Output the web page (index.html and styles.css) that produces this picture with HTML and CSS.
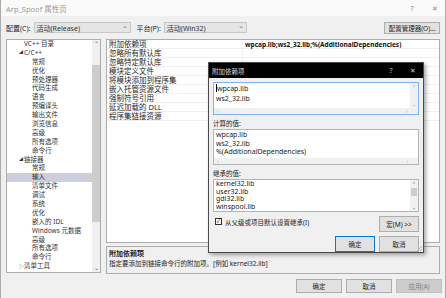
FILE: index.html
```html
<!DOCTYPE html>
<html lang="zh-CN">
<head>
    <meta charset="UTF-8">
    <title>Arp_Spoof 属性页</title>
    <link rel="stylesheet" href="styles.css">
</head>
<body>
    <div class="window">
        <div class="titlebar">
            <span class="title">Arp_Spoof 属性页</span>
            <span class="tb-btn">?</span>
            <span class="tb-btn">✕</span>
        </div>

        <div class="config-row">
            <span class="label">配置(C):</span>
            <div class="combo combo-config">活动(Release)<span class="arrow">⌄</span></div>
            <span class="label">平台(P):</span>
            <div class="combo combo-platform">活动(Win32)<span class="arrow">⌄</span></div>
            <button class="btn btn-manager">配置管理器(O)...</button>
        </div>

        <div class="main">
            <div class="tree">
                <ul class="tree-list">
                    <li class="lv1">VC++ 目录</li>
                    <li class="lv1 open">C/C++</li>
                    <li class="lv2">常规</li>
                    <li class="lv2">优化</li>
                    <li class="lv2">预处理器</li>
                    <li class="lv2">代码生成</li>
                    <li class="lv2">语言</li>
                    <li class="lv2">预编译头</li>
                    <li class="lv2">输出文件</li>
                    <li class="lv2">浏览信息</li>
                    <li class="lv2">高级</li>
                    <li class="lv2">所有选项</li>
                    <li class="lv2">命令行</li>
                    <li class="lv1 open">链接器</li>
                    <li class="lv2">常规</li>
                    <li class="lv2 selected">输入</li>
                    <li class="lv2">清单文件</li>
                    <li class="lv2">调试</li>
                    <li class="lv2">系统</li>
                    <li class="lv2">优化</li>
                    <li class="lv2">嵌入的 IDL</li>
                    <li class="lv2">Windows 元数据</li>
                    <li class="lv2">高级</li>
                    <li class="lv2">所有选项</li>
                    <li class="lv2">命令行</li>
                    <li class="lv1 closed">清单工具</li>
                </ul>
                <div class="vscroll">
                    <span class="sc-arrow">⌃</span>
                    <div class="sc-track"><div class="sc-thumb"></div></div>
                    <span class="sc-arrow">⌄</span>
                </div>
            </div>

            <div class="right">
                <div class="grid">
                    <div class="row"><span class="name">附加依赖项</span><span class="value bold">wpcap.lib;ws2_32.lib;%(AdditionalDependencies)</span></div>
                    <div class="row"><span class="name">忽略所有默认库</span><span class="value"></span></div>
                    <div class="row"><span class="name">忽略特定默认库</span><span class="value"></span></div>
                    <div class="row"><span class="name">模块定义文件</span><span class="value"></span></div>
                    <div class="row"><span class="name">将模块添加到程序集</span><span class="value"></span></div>
                    <div class="row"><span class="name">嵌入托管资源文件</span><span class="value"></span></div>
                    <div class="row"><span class="name">强制符号引用</span><span class="value"></span></div>
                    <div class="row"><span class="name">延迟加载的 DLL</span><span class="value"></span></div>
                    <div class="row"><span class="name">程序集链接资源</span><span class="value"></span></div>
                </div>
                <div class="desc">
                    <div class="desc-title">附加依赖项</div>
                    <div class="desc-text">指定要添加到链接命令行的附加项。[例如 kernel32.lib]</div>
                </div>
            </div>
        </div>

        <div class="footer">
            <button class="btn">确定</button>
            <button class="btn">取消</button>
            <button class="btn" disabled>应用(A)</button>
        </div>

        <div class="dlg">
            <div class="dlg-title">
                <span class="title">附加依赖项</span>
                <span class="tb-btn">?</span>
                <span class="tb-btn">✕</span>
            </div>
            <div class="dlg-body">
                <div class="box box-edit">
                    <div class="box-inner">
                        <div class="box-lines"><span class="caret"></span>wpcap.lib<br>ws2_32.lib</div>
                        <div class="box-vs"><span>⌃</span><span>⌄</span></div>
                    </div>
                    <div class="hscroll"><span>‹</span><span>›</span></div>
                </div>

                <div class="dlg-label">计算的值:</div>
                <div class="box box-calc">
                    <div class="box-lines">wpcap.lib<br>ws2_32.lib<br>%(AdditionalDependencies)</div>
                    <div class="hscroll"><span>‹</span><span>›</span></div>
                </div>

                <div class="dlg-label">继承的值:</div>
                <div class="box box-inherit">
                    <div class="box-lines">kernel32.lib<br>user32.lib<br>gdi32.lib<br>winspool.lib</div>
                    <div class="box-vs">
                        <span>⌃</span>
                        <div class="vs-thumb"></div>
                        <span>⌄</span>
                    </div>
                </div>

                <div class="dlg-row">
                    <label class="check"><span class="checkbox">✓</span>从父级或项目默认设置继承(I)</label>
                    <button class="btn btn-small">宏(M) &gt;&gt;</button>
                </div>
                <div class="dlg-buttons">
                    <button class="btn btn-small focused">确定</button>
                    <button class="btn btn-small">取消</button>
                </div>
            </div>
            <span class="grip"></span>
        </div>
    </div>
</body>
</html>
```

FILE: styles.css
```css
body {
    margin: 0;
    padding: 0;
    width: 446px;
    height: 298px;
    overflow: hidden;
    font-family: "Noto Sans", "Noto Sans CJK SC", sans-serif;
    font-size: 7px;
    color: #1e1e1e;
    background-color: #f0f0f0;
}

.window {
    position: relative;
    width: 446px;
    height: 298px;
    box-sizing: border-box;
    border-left: 1px solid #aaa;
    border-right: 1px solid #aaa;
    display: flex;
    flex-direction: column;
}

.titlebar {
    height: 16px;
    background-color: #fafafa;
    display: flex;
    align-items: center;
    padding-left: 5px;
    padding-right: 6px;
    gap: 15px;
    flex-shrink: 0;
}

.titlebar .title {
    flex: 1;
    color: #999;
    font-size: 7.5px;
}

.tb-btn {
    color: #888;
    font-size: 7px;
    width: 8px;
    text-align: center;
}

.config-row {
    height: 22px;
    display: flex;
    align-items: center;
    padding-left: 5px;
    padding-top: 1px;
    box-sizing: border-box;
    flex-shrink: 0;
}

.label {
    margin-right: 3px;
}

.combo {
    height: 11px;
    box-sizing: border-box;
    border: 1px solid #c8c8c8;
    background-color: #e5e5e5;
    display: flex;
    align-items: center;
    padding-left: 2px;
    position: relative;
    color: #333;
}

.combo .arrow {
    margin-left: auto;
    margin-right: 2px;
    color: #777;
    font-size: 7px;
    line-height: 6px;
    margin-top: -3px;
}

.combo-config {
    width: 97px;
    margin-right: 6px;
}

.combo-platform {
    width: 83px;
}

.btn {
    font-family: "Noto Sans", "Noto Sans CJK SC", sans-serif;
    font-size: 6.5px;
    color: #1e1e1e;
    background-color: #e1e1e1;
    border: 1px solid #adadad;
    padding: 0;
    height: 14px;
    width: 46px;
}

.btn:disabled {
    background-color: #cccccc;
    border-color: #bfbfbf;
    color: #838383;
}

.btn-manager {
    margin-left: auto;
    margin-right: 5px;
    width: 56px;
    height: 12px;
}

.main {
    flex: 1;
    display: flex;
    padding-left: 5px;
    padding-right: 5px;
    padding-top: 1px;
    gap: 5px;
}

.tree {
    width: 95px;
    height: 234px;
    box-sizing: border-box;
    border: 1px solid #adadad;
    background-color: #fff;
    display: flex;
    overflow: hidden;
}

.tree-list {
    list-style: none;
    margin: 0;
    padding: 0;
    flex: 1;
}

.tree-list li {
    height: 8.9px;
    line-height: 8.9px;
    font-size: 6.5px;
    color: #333;
    position: relative;
    white-space: nowrap;
}

.tree-list .lv1 {
    padding-left: 17px;
}

.tree-list .lv2 {
    padding-left: 25px;
}

.tree-list .open::before {
    content: "◢";
    position: absolute;
    left: 12px;
    top: 0;
    font-size: 4px;
    color: #333;
}

.tree-list .closed::before {
    content: "▷";
    position: absolute;
    left: 12px;
    top: 0;
    font-size: 5px;
    color: #555;
}

.tree-list .selected {
    background-color: #cccedb;
}

.vscroll {
    width: 8px;
    background-color: #f0f0f0;
    display: flex;
    flex-direction: column;
    align-items: center;
}

.sc-arrow {
    height: 8px;
    line-height: 8px;
    font-size: 6px;
    color: #606060;
}

.sc-track {
    flex: 1;
    width: 100%;
    display: flex;
    flex-direction: column;
}

.sc-thumb {
    margin-top: 17px;
    height: 157px;
    background-color: #cdcdcd;
}

.right {
    flex: 1;
    display: flex;
    flex-direction: column;
    gap: 3px;
}

.grid {
    height: 204px;
    box-sizing: border-box;
    border: 1px solid #adadad;
    background-color: #fff;
}

.row {
    height: 9px;
    display: flex;
    border-bottom: 1px solid #f0f0f0;
    box-sizing: border-box;
}

.name {
    width: 133px;
    padding-left: 2px;
    line-height: 9px;
    font-size: 7.5px;
    color: #1e1e1e;
    border-right: 1px solid #f0f0f0;
    white-space: nowrap;
    overflow: hidden;
}

.value {
    flex: 1;
    padding-left: 2px;
    line-height: 9px;
    white-space: nowrap;
}

.bold {
    font-weight: bold;
    font-size: 6.5px;
    color: #111;
}

.desc {
    height: 28px;
    box-sizing: border-box;
    border: 1px solid #adadad;
    padding: 2px 2px;
}

.desc-title {
    font-weight: bold;
    font-size: 7px;
    line-height: 10px;
}

.desc-text {
    font-size: 6.5px;
    line-height: 10px;
}

.footer {
    height: 25px;
    display: flex;
    justify-content: flex-end;
    align-items: center;
    padding-right: 3px;
    gap: 4px;
    padding-bottom: 1px;
    box-sizing: border-box;
}

/* inner dialog */
.dlg {
    position: absolute;
    left: 207px;
    top: 62px;
    width: 216px;
    height: 191px;
    box-sizing: border-box;
    border: 1px solid #4a4a4a;
    background-color: #f0f0f0;
    box-shadow: 2px 2px 4px rgba(0, 0, 0, 0.35);
    display: flex;
    flex-direction: column;
}

.dlg-title {
    height: 15px;
    background-color: #000;
    display: flex;
    align-items: center;
    padding-left: 3px;
    padding-right: 6px;
    gap: 14px;
    flex-shrink: 0;
}

.dlg-title .title {
    flex: 1;
    color: #ddd;
    font-size: 6.5px;
}

.dlg-title .tb-btn {
    color: #ccc;
}

.dlg-body {
    flex: 1;
    padding: 4px 4px 0 4px;
    display: flex;
    flex-direction: column;
}

.box {
    box-sizing: border-box;
    border: 1px solid #b4b4b4;
    background-color: #fff;
    display: flex;
    flex-direction: column;
    font-size: 7px;
    color: #222;
}

.box-edit {
    height: 33px;
    border-color: #7eb4ea;
}

.box-inner {
    flex: 1;
    display: flex;
}

.box-lines {
    flex: 1;
    padding-left: 2px;
    padding-top: 1px;
    line-height: 9.5px;
    white-space: nowrap;
    overflow: hidden;
}

.caret {
    display: inline-block;
    width: 1px;
    height: 8px;
    background-color: #000;
    vertical-align: -1px;
}

.box-vs {
    width: 8px;
    display: flex;
    flex-direction: column;
    align-items: center;
    justify-content: space-between;
    background-color: #f0f0f0;
    font-size: 5px;
    color: #999;
    line-height: 8px;
}

.hscroll {
    height: 6px;
    flex-shrink: 0;
    background-color: #f0f0f0;
    display: flex;
    justify-content: space-between;
    padding: 0 10px 0 3px;
    font-size: 5px;
    line-height: 6px;
    color: #aaa;
}

.dlg-label {
    margin-top: 4px;
    height: 10px;
    line-height: 10px;
    font-size: 6.5px;
    color: #222;
}

.box-calc {
    height: 36px;
    overflow: hidden;
}

.box-calc .box-lines {
    line-height: 8.7px;
    flex: none;
    height: 27px;
}

.box-inherit {
    height: 33px;
    flex-direction: row;
    overflow: hidden;
}

.box-inherit .box-lines {
    padding-top: 0;
    line-height: 7.7px;
}

.vs-thumb {
    width: 6px;
    height: 8px;
    background-color: #cdcdcd;
    margin-bottom: auto;
}

.box-inherit .box-vs {
    justify-content: flex-start;
    color: #666;
}

.dlg-row {
    margin-top: 4px;
    display: flex;
    align-items: center;
    justify-content: space-between;
    height: 16px;
}

.check {
    display: flex;
    align-items: center;
    gap: 3px;
    font-size: 6.5px;
    color: #222;
    padding-left: 2px;
    margin-top: -5px;
}

.checkbox {
    width: 7px;
    height: 7px;
    box-sizing: border-box;
    border: 1px solid #333;
    background-color: #fff;
    font-size: 6px;
    line-height: 5px;
    text-align: center;
}

.btn-small {
    width: 40px;
    height: 16px;
    font-size: 6.5px;
}

.focused {
    border-color: #0078d7;
}

.dlg-buttons {
    margin-top: 4px;
    display: flex;
    justify-content: flex-end;
    gap: 4px;
}

.grip {
    position: absolute;
    right: 1px;
    bottom: 1px;
    width: 5px;
    height: 5px;
    background: linear-gradient(135deg, transparent 50%, #aaa 50%, #aaa 60%, transparent 60%, transparent 75%, #aaa 75%, #aaa 85%, transparent 85%);
}
```
